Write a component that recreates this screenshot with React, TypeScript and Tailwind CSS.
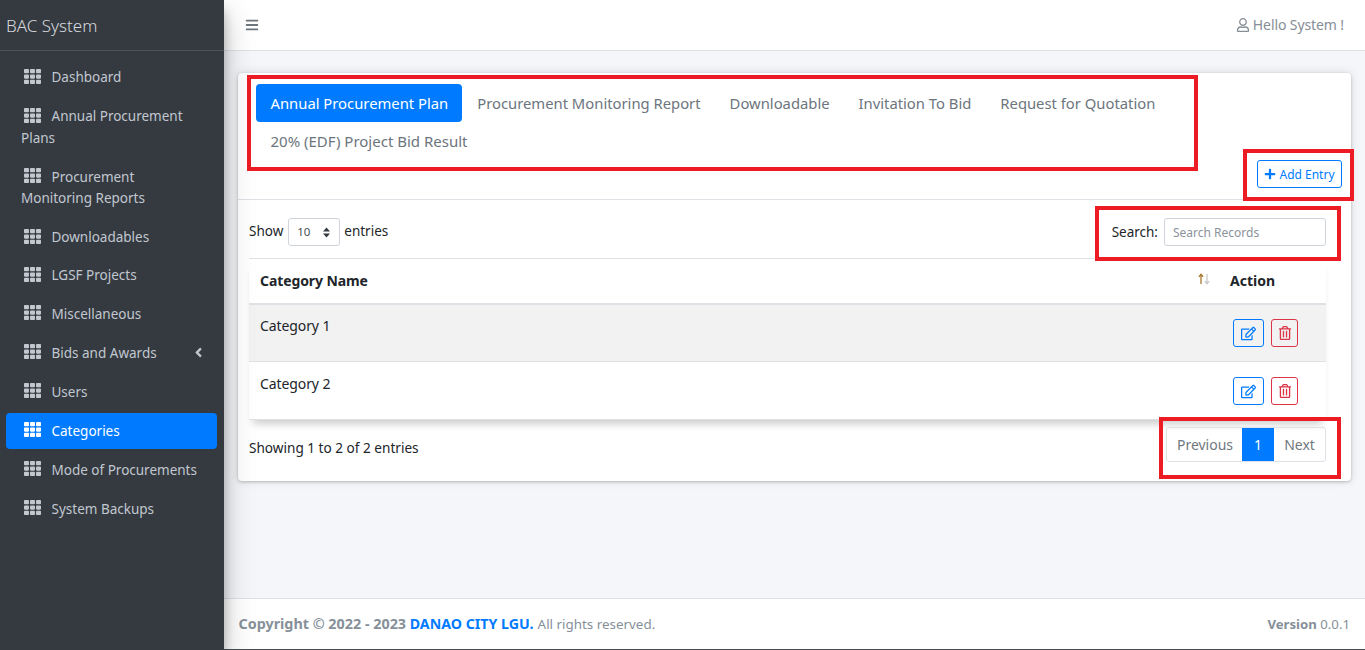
import React from "react";
import { FaBars, FaPlus, FaRegEdit, FaRegTrashAlt, FaRegUser, FaTh, FaAngleLeft } from "react-icons/fa";

const font = { fontFamily: '"Noto Sans", "Open Sans", sans-serif' };

function NavItem({ label, active, caret, h }: { label: string; active?: boolean; caret?: boolean; h: string }) {
  return (
    <div className={`relative ml-[6px] mr-[7px] pl-[15px] pr-[14px] rounded-[4px] text-[13.5px] leading-[21.5px] flex-none ${h} ${active ? "bg-[#007bff] text-white" : "text-[#c2c7d0]"}`}>
      <FaTh className="inline-block ml-[3px] mr-[10.5px] -mt-[4px] align-middle" size={17} />
      {label}
      {caret && <FaAngleLeft className="absolute right-[11px] top-[10px]" size={15} />}
    </div>
  );
}

function Tab({ label, active, size = "text-[14.8px]" }: { label: string; active?: boolean; size?: string }) {
  return (
    <div className={`h-[38px] pl-[14.5px] ${active ? "pr-[14px] mr-[0.5px]" : "pr-[14.5px]"} flex items-center rounded-[4px] ${size} whitespace-nowrap ${active ? "bg-[#007bff] text-white" : "text-[#6c757d]"}`}>
      {label}
    </div>
  );
}

function Row({ name, striped, h, pad, padBtn }: { name: string; striped?: boolean; h: string; pad: string; padBtn: string }) {
  return (
    <div className={`flex border-b border-[#dee2e6] ${h} ${striped ? "bg-[#f2f2f2]" : "bg-white"}`}>
      <div className={`flex-1 pl-[11px] ${pad} text-[14px] leading-[21px] tracking-[-0.1px] text-[#212529]`}>{name}</div>
      <div className={`w-[93px] ${padBtn} flex gap-[7px] items-start`}>
        <div className="w-[31px] h-[28px] border border-[#007bff] rounded-[3px] flex items-center justify-center text-[#007bff]">
          <FaRegEdit size={15} />
        </div>
        <div className="w-[27px] h-[28px] border border-[#dc3545] rounded-[3px] flex items-center justify-center text-[#dc3545]">
          <FaRegTrashAlt size={14} />
        </div>
      </div>
    </div>
  );
}

function Mark({ className }: { className: string }) {
  return <div className={`absolute border-[4px] border-[#ed1c24] pointer-events-none ${className}`} />;
}

export default function App() {
  const items = [
    { label: "Dashboard", h: "h-[39px] pt-[9px]" },
    { label: "Annual Procurement Plans", h: "h-[60.5px] pt-[9px]" },
    { label: "Procurement Monitoring Reports", h: "h-[60.5px] pt-[9px]" },
    { label: "Downloadables", h: "h-[39px] pt-[9px]" },
    { label: "LGSF Projects", h: "h-[38.5px] pt-[8px]" },
    { label: "Miscellaneous", h: "h-[39px] pt-[8px]" },
    { label: "Bids and Awards", h: "h-[39px] pt-[8px]", caret: true },
    { label: "Users", h: "h-[39px] pt-[8px]" },
    { label: "Categories", h: "h-[36px] mb-[3px] pt-[8px]", active: true },
    { label: "Mode of Procurements", h: "h-[39px] pt-[8px]" },
    { label: "System Backups", h: "h-[39px] pt-[8px]" },
  ];
  return (
    <div style={font} className="relative flex w-[1365px] h-[650px] overflow-hidden bg-[#f4f6f9]">
      <aside className="w-[224px] flex-none h-full bg-[#343a40] shadow-[0_14px_28px_rgba(0,0,0,0.25),0_10px_10px_rgba(0,0,0,0.22)] z-10 flex flex-col">
        <div className="h-[51px] flex-none border-b border-[#4b545c] pl-[6px] pt-[1px] flex items-center text-[17px] text-[#d6d9de] font-light">BAC System</div>
        <nav className="pt-[7px] flex flex-col">
          {items.map((i) => (
            <NavItem key={i.label} {...i} />
          ))}
        </nav>
      </aside>
      <div className="flex-1 flex flex-col min-w-0">
        <header className="h-[51px] flex-none bg-white border-b border-[#dee2e6] flex items-center justify-between pl-[21px] pr-[21px]">
          <FaBars size={14} className="text-[#6c757d]" />
          <div className="flex items-center gap-[3px] text-[14px] leading-[20px] text-[#868e96] tracking-[-0.1px]">
            <FaRegUser size={14} />
            Hello System !
          </div>
        </header>
        <main className="flex-1 px-[14px] pt-[22px] min-h-0">
          <div className="w-[1113px] h-[408px] bg-white rounded-[4px] shadow-[0_0_10px_rgba(0,0,0,0.13),0_1px_3px_rgba(0,0,0,0.2)]">
            <div className="h-[127px] border-b border-[#dee2e6] relative pl-[18px] pt-[11px]">
              <div className="flex flex-wrap w-[940px]">
                <Tab label="Annual Procurement Plan" active />
                <Tab label="Procurement Monitoring Report" />
                <Tab label="Downloadable" />
                <Tab label="Invitation To Bid" />
                <Tab label="Request for Quotation" />
                <Tab label="20% (EDF) Project Bid Result" size="text-[15px]" />
              </div>
              <div className="absolute left-[1019px] top-[87px] w-[85px] h-[28px] border border-[#007bff] rounded-[3px] flex items-center justify-center gap-[3px] text-[12px] text-[#007bff] whitespace-nowrap">
                <FaPlus size={12} />
                <span className="mt-[1px]">Add Entry</span>
              </div>
            </div>
            <div className="px-[11px]">
              <div className="h-[59px] pt-[18px] flex items-start justify-between border-b border-[#dee2e6] text-[13.5px] text-[#212529] w-[1077px]">
                <div className="flex items-center h-[28px] gap-[4px]">
                  <span className="-mt-[1px]">Show</span>
                  <div className="ml-[1px] w-[52px] h-[28px] border border-[#ced4da] rounded-[3px] flex items-center justify-between pl-[8px] pr-[9px] text-[11.5px] text-[#495057]">
                    10
                    <svg width="7" height="11" viewBox="0 0 7 11" fill="#343a40">
                      <path d="M3.5 0.5 L7 4.5 H0 Z M3.5 10.5 L0 6.5 H7 Z" />
                    </svg>
                  </div>
                  <span className="-mt-[1px]">entries</span>
                </div>
                <div className="flex items-center h-[28px] gap-[6px]">
                  <span>Search:</span>
                  <div className="w-[162px] h-[28px] pt-[1px] border border-[#ced4da] rounded-[3px] flex items-center pl-[8px] text-[12px] text-[#8a929a]">
                    Search Records
                  </div>
                </div>
              </div>
              <div className="w-[1077px] shadow-[0_8px_8px_-4px_rgba(0,0,0,0.2)]">
                <div className="flex h-[46px] pb-[2px] border-b-[2px] border-[#dee2e6] text-[14px] font-bold text-[#212529] items-center relative">
                  <div className="flex-1 pl-[11px] tracking-[-0.1px]">Category Name</div>
                  <svg width="14" height="12" viewBox="0 0 14 12" className="absolute left-[948px] top-[14px]" fill="none" strokeWidth="1.3">
                    <path d="M4 11V1.5M1.8 3.8 4 1.2 6.2 3.8" stroke="#a8762c" />
                    <path d="M10 1v9.5M7.8 8.2 10 10.8 12.2 8.2" stroke="#c8c8c8" />
                  </svg>
                  <div className="w-[96px]">Action</div>
                </div>
                <Row name="Category 1" striped h="h-[57px]" pad="pt-[10px]" padBtn="pt-[14px]" />
                <Row name="Category 2" h="h-[58px]" pad="pt-[11px]" padBtn="pt-[15px]" />
              </div>
              <div className="flex items-center justify-between w-[1077px] pt-[7px]">
                <div className="text-[13.6px] mt-[8px] text-[#212529]">Showing 1 to 2 of 2 entries</div>
                <div className="flex h-[35px] border border-[#dee2e6] rounded-[3px] text-[14px] text-[#6f7880] items-stretch">
                  <div className="w-[75px] pl-[1px] flex items-center justify-center">Previous</div>
                  <div className="w-[32px] flex items-center justify-center bg-[#007bff] text-white">1</div>
                  <div className="w-[51px] flex items-center justify-center">Next</div>
                </div>
              </div>
            </div>
          </div>
        </main>
        <footer className="h-[52px] flex-none bg-white border-t border-[#dee2e6] border-b border-b-[#4a4f55] flex items-center justify-between pl-[14.5px] pr-[15px] text-[#869099]">
          <div className="whitespace-nowrap -mt-[2px]">
            <b className="text-[14.35px]">Copyright © 2022 - 2023 </b>
            <b className="text-[14.2px] text-[#007bff]">DANAO CITY LGU.</b>{" "}
            <span className="text-[13.4px]">All rights reserved.</span>
          </div>
          <div className="text-[13.2px] mt-[1px]">
            <b>Version</b> 0.0.1
          </div>
        </footer>
      </div>
      <Mark className="left-[247px] top-[75px] w-[951px] h-[96px]" />
      <Mark className="left-[1243px] top-[149px] w-[111px] h-[52px]" />
      <Mark className="left-[1095px] top-[206px] w-[246px] h-[55px]" />
      <Mark className="left-[1159px] top-[417px] w-[182px] h-[62px]" />
    </div>
  );
}
